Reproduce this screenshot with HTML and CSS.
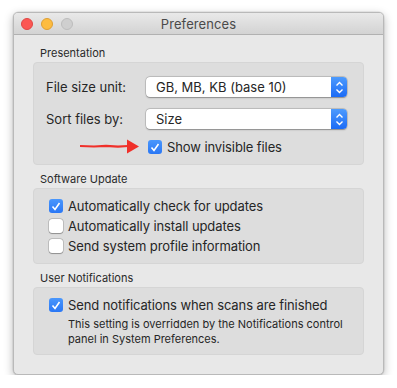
FILE: index.html
```html
<!DOCTYPE html>
<html>
<head>
<meta charset="utf-8">
<link rel="stylesheet" href="styles.css">
</head>
<body>
<div class="window">
  <div class="titlebar">
    <div class="lights">
      <span class="light red"></span>
      <span class="light yellow"></span>
      <span class="light gray"></span>
    </div>
    <div class="title">Preferences</div>
  </div>
  <div class="content">
    <div class="group-label">Presentation</div>
    <div class="box box-presentation">
      <div class="row">
        <span class="label">File size unit:</span>
        <div class="popup"><span class="popup-text">GB, MB, KB (base 10)</span><span class="stepper"><svg width="9" height="13" viewBox="0 0 9 13"><path d="M1.5 4.5 L4.5 1.5 L7.5 4.5 M1.5 8.5 L4.5 11.5 L7.5 8.5" fill="none" stroke="#fff" stroke-width="1.4"/></svg></span></div>
      </div>
      <div class="row row-second">
        <span class="label">Sort files by:</span>
        <div class="popup"><span class="popup-text">Size</span><span class="stepper"><svg width="9" height="13" viewBox="0 0 9 13"><path d="M1.5 4.5 L4.5 1.5 L7.5 4.5 M1.5 8.5 L4.5 11.5 L7.5 8.5" fill="none" stroke="#fff" stroke-width="1.4"/></svg></span></div>
      </div>
      <div class="row row-check">
        <svg class="arrow" width="60" height="15" viewBox="0 0 60 15"><path d="M0 7 L14 7.5 L26 6.8 L38 7.6 L48 7" stroke="#f0302a" stroke-width="2.2" fill="none"/><path d="M47 0.5 L59 7.5 L47 14.5 Z" fill="#f0302a"/></svg>
        <span class="check on"><svg width="10" height="9" viewBox="0 0 10 9"><path d="M1.5 4.5 L4 7.5 L8.5 1" fill="none" stroke="#fff" stroke-width="1.6"/></svg></span>
        <span class="check-text">Show invisible files</span>
      </div>
    </div>

    <div class="group-label">Software Update</div>
    <div class="box box-list">
      <div class="check-row"><span class="check on"><svg width="10" height="9" viewBox="0 0 10 9"><path d="M1.5 4.5 L4 7.5 L8.5 1" fill="none" stroke="#fff" stroke-width="1.6"/></svg></span><span class="check-text">Automatically check for updates</span></div>
      <div class="check-row"><span class="check"></span><span class="check-text">Automatically install updates</span></div>
      <div class="check-row"><span class="check"></span><span class="check-text">Send system profile information</span></div>
    </div>

    <div class="group-label">User Notifications</div>
    <div class="box box-list box-notify">
      <div class="check-row"><span class="check on"><svg width="10" height="9" viewBox="0 0 10 9"><path d="M1.5 4.5 L4 7.5 L8.5 1" fill="none" stroke="#fff" stroke-width="1.6"/></svg></span><span class="check-text">Send notifications when scans are finished</span></div>
      <p class="note">This setting is overridden by the Notifications control panel in System Preferences.</p>
    </div>
  </div>
</div>
</body>
</html>
```
FILE: styles.css
```css
* { box-sizing: border-box; }
html, body { margin: 0; padding: 0; background: #fff; }
body {
  font-family: "Inter", "Roboto", "Liberation Sans", sans-serif;
  color: #262626;
  padding: 12px 0 0 13px;
}
.window {
  width: 371px;
  height: 363px;
  background: #e8e8e8;
  border: 1px solid #b9b9b9;
  border-radius: 5px;
  box-shadow: 0 3px 10px rgba(0,0,0,0.28), 0 0 0 0.5px rgba(0,0,0,0.1);
  overflow: hidden;
  display: flex;
  flex-direction: column;
}
.titlebar {
  height: 22px;
  flex: none;
  background: linear-gradient(#e9e9e9, #d3d3d3);
  border-bottom: 1px solid #b1b1b1;
  position: relative;
  display: flex;
  align-items: center;
  justify-content: center;
}
.lights {
  position: absolute;
  left: 7px;
  top: 5px;
  display: flex;
  gap: 8px;
}
.light {
  width: 12px;
  height: 12px;
  border-radius: 50%;
  display: block;
}
.red { background: #fc5753; border: 0.5px solid #df4744; }
.yellow { background: #fdbc40; border: 0.5px solid #de9f34; }
.gray { background: #cfcfcf; border: 0.5px solid #bdbdbd; }
.title {
  font-size: 13px;
  color: #4a4a4a;
  letter-spacing: 0.1px;
}
.content {
  padding: 13px 19px 0 19px;
}
.group-label {
  font-size: 11px;
  color: #2a2a2a;
  margin: 0 0 3px 7px;
  line-height: 11px;
}
.box {
  background: #dddddd;
  border: 1px solid #d5d5d5;
  border-radius: 4px;
  margin-bottom: 9px;
}
.box-presentation {
  padding: 14px 16px 0 12px;
  height: 103px;
}
.row {
  display: flex;
  align-items: center;
  height: 20px;
  margin-bottom: 12px;
}
.row-second { margin-bottom: 8px; }
.label {
  font-size: 13px;
  width: 100px;
  color: #262626;
}
.popup {
  flex: 1;
  height: 20px;
  background: #fff;
  border-radius: 4px;
  box-shadow: 0 0 0 0.5px rgba(0,0,0,0.2), 0 0.5px 1.5px rgba(0,0,0,0.3);
  display: flex;
  align-items: center;
  overflow: hidden;
}
.popup-text {
  flex: 1;
  font-size: 13px;
  padding-left: 10px;
  color: #262626;
}
.stepper {
  width: 16px;
  height: 20px;
  background: linear-gradient(#4d9bfd, #1b6bf6);
  display: flex;
  align-items: center;
  justify-content: center;
}
.row-check {
  margin-bottom: 0;
  padding-left: 34px;
  position: relative;
}
.arrow {
  position: absolute;
  left: 34px;
  top: 2px;
}
.row-check .check { margin-left: 68px; }
.check {
  width: 14px;
  height: 14px;
  border-radius: 3px;
  background: #fff;
  box-shadow: 0 0 0 0.5px rgba(0,0,0,0.25), 0 0.5px 1px rgba(0,0,0,0.25);
  display: inline-flex;
  align-items: center;
  justify-content: center;
  flex: none;
}
.check.on {
  background: linear-gradient(#4a97fc, #2a77f5);
  box-shadow: none;
}
.check-text {
  font-size: 13px;
  margin-left: 5px;
  letter-spacing: -0.1px;
  color: #262626;
}
.box-list {
  padding: 7px 16px 7px 15px;
  height: 76px;
}
.check-row {
  display: flex;
  align-items: center;
  height: 20px;
}
.box-notify {
  height: 68px;
}
.note {
  margin: 2px 0 0 19px;
  font-size: 11px;
  line-height: 15px;
  color: #262626;
}
```
